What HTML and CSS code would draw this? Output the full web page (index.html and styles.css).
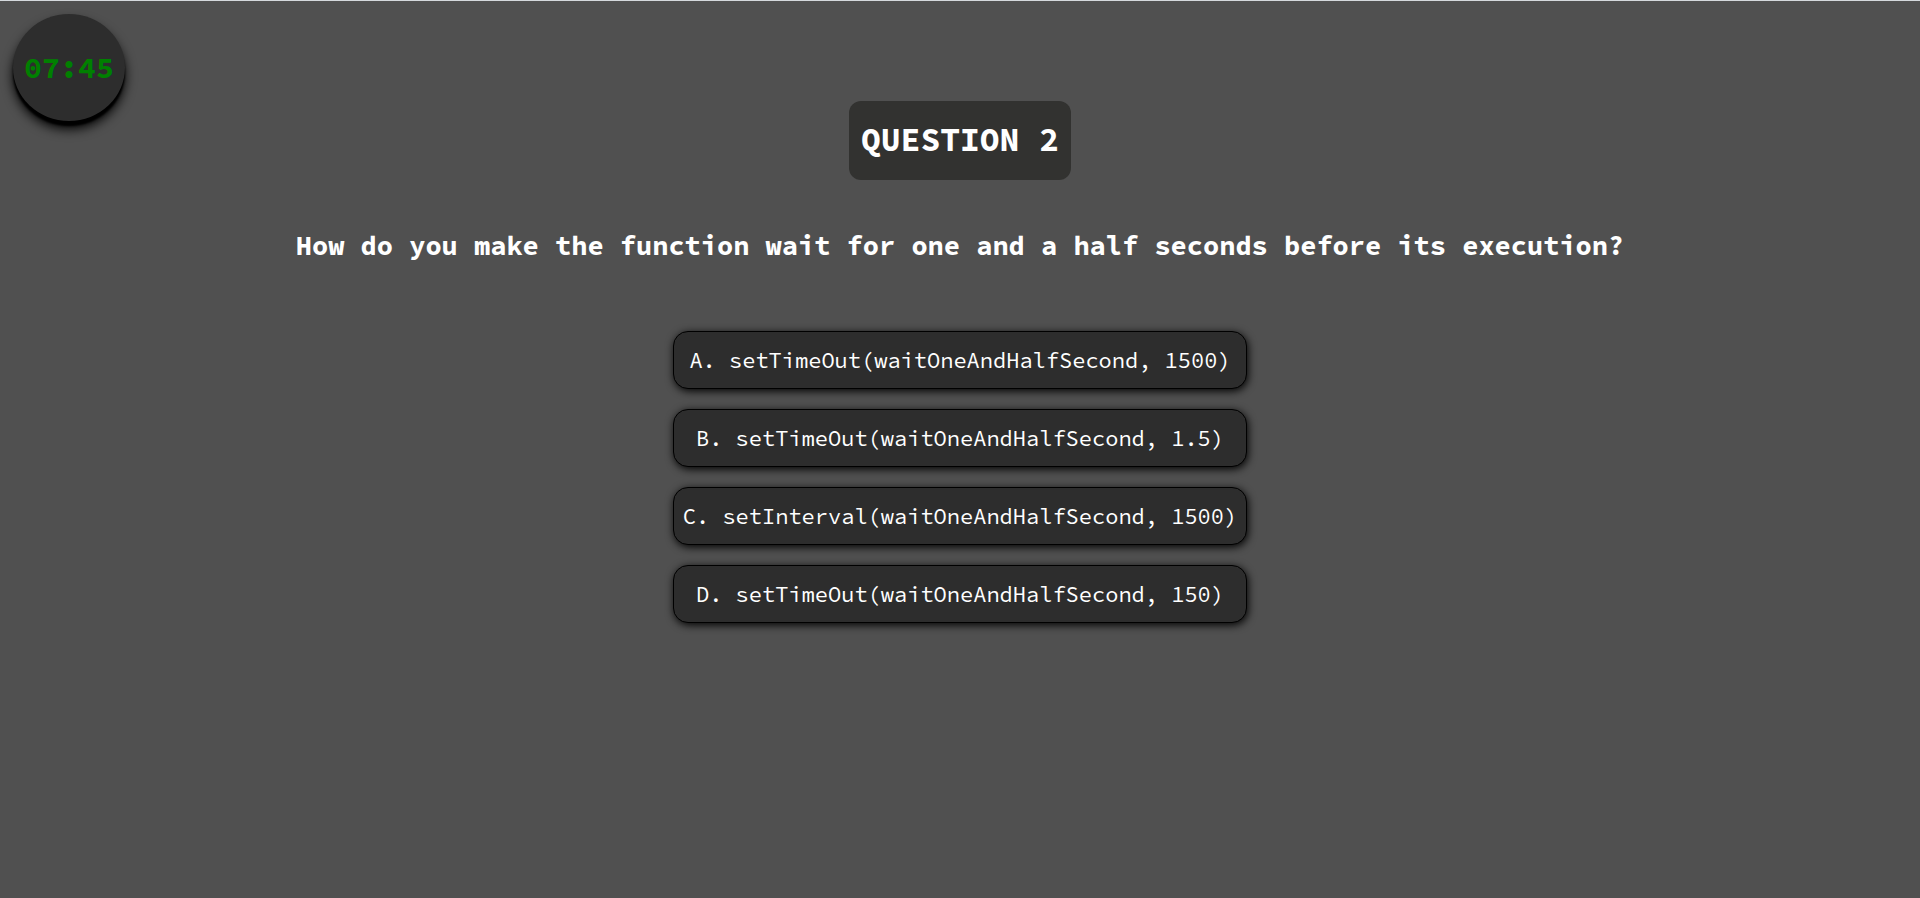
FILE: index.html
```html
<!DOCTYPE html>
<html lang="en">
<head>
<meta charset="utf-8">
<title>Quiz</title>
<link rel="stylesheet" href="styles.css">
</head>
<body>
<div class="timer" role="timer">07:45</div>
<main class="quiz">
  <h1 class="number">QUESTION 2</h1>
  <h2 class="question">How do you make the function wait for one and a half seconds before its execution?</h2>
  <div class="answers">
    <button class="answer" type="button">A. setTimeOut(waitOneAndHalfSecond, 1500)</button>
    <button class="answer" type="button">B. setTimeOut(waitOneAndHalfSecond, 1.5)</button>
    <button class="answer" type="button">C. setInterval(waitOneAndHalfSecond, 1500)</button>
    <button class="answer" type="button">D. setTimeOut(waitOneAndHalfSecond, 150)</button>
  </div>
</main>
</body>
</html>
```
FILE: styles.css
```css
* {
  box-sizing: border-box;
}

body {
  margin: 0;
  min-height: 100vh;
  border-top: 1px solid #d5d9dd;
  background: #505050;
  color: #fff;
  font-family: "Source Code Pro", "Liberation Mono", monospace;
}

.timer {
  position: absolute;
  top: 14px;
  left: 13px;
  padding: 36px 11px;
  border-radius: 50%;
  background: #2d2d2d;
  box-shadow: 0 5px 2px #000, 0 8px 12px #000;
  color: #008000;
  font-size: 30px;
  font-weight: 700;
  line-height: 35px;
}

.quiz {
  display: flex;
  flex-direction: column;
  align-items: center;
  padding: 100px 20px 40px;
}

.number {
  margin: 0;
  padding: 19px 12px 20px;
  border-radius: 12px;
  background: #323230;
  font-size: 33px;
  line-height: 40px;
}

.question {
  margin: 48px 0 69px;
  font-size: 27px;
  line-height: 34px;
  text-align: center;
}

.answers {
  display: grid;
  gap: 20px;
}

.answer {
  padding: 14px 9px;
  border: 1px solid #000;
  border-radius: 15px;
  background: #2d2d2d;
  box-shadow: 1px 2px 8px #000;
  color: #fff;
  font-family: inherit;
  font-size: 22px;
  line-height: 28px;
  cursor: pointer;
}
```
